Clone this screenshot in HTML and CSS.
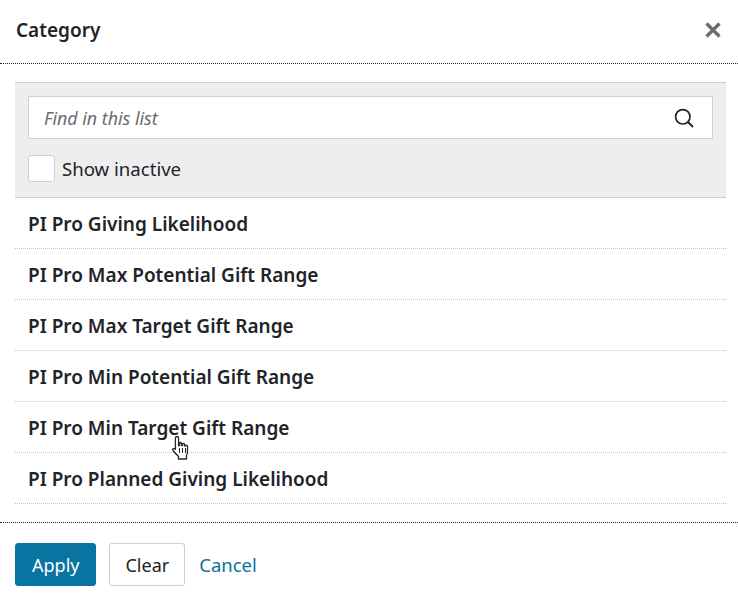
FILE: index.html
```html
<!DOCTYPE html>
<html lang="en">
<head>
<meta charset="utf-8">
<title>Category</title>
<link rel="stylesheet" href="styles.css">
</head>
<body>
<div class="modal">
  <header class="head">
    <h1 class="title">Category</h1>
    <svg class="close" width="16" height="16" viewBox="0 0 16 16" aria-hidden="true"><path d="M1.500 1.500 14.500 14.500M14.500 1.500 1.500 14.500" fill="none" stroke="#686c73" stroke-width="3.200"/></svg>
  </header>
  <main class="body">
    <section class="filter">
      <div class="search">
        <span class="placeholder">Find in this list</span>
        <svg width="22" height="22" viewBox="0 0 22 22" aria-hidden="true"><circle cx="9.800" cy="9.800" r="7.200" fill="none" stroke="#212327" stroke-width="1.700"/><path d="M15 15 20 20" fill="none" stroke="#212327" stroke-width="1.900"/></svg>
      </div>
      <label class="check"><span class="box"></span>Show inactive</label>
    </section>
    <ul class="list">
      <li class="row">PI Pro Giving Likelihood</li>
      <li class="row">PI Pro Max Potential Gift Range</li>
      <li class="row">PI Pro Max Target Gift Range</li>
      <li class="row">PI Pro Min Potential Gift Range</li>
      <li class="row">PI Pro Min Target Gift Range
        <svg class="cursor" width="20" height="26" viewBox="0 0 20 26" aria-hidden="true"><path d="M6 1.500c1 0 1.600.7 1.600 1.700v7.600l1-.3V8.400c0-1.200 2-1.200 2 0v2l.9.1V9.300c0-1.200 2-1.200 2 0v1.500l.8.2c0-1.300 2.200-1.200 2.200.2v5.800c0 1.500-.5 2.500-1 3.500V24H7.500v-2.500C6 20 3.500 17.500 2 15.500c-1-1.300.5-2.800 2-1.500l.4.400V3.200c0-1 .6-1.700 1.600-1.700Z" fill="#fff" stroke="#25272b" stroke-width="1.300" stroke-linejoin="round"/><path d="M8.500 13v5M11.500 13v5M14.500 13v5" stroke="#25272b" stroke-width="1"/></svg>
      </li>
      <li class="row">PI Pro Planned Giving Likelihood</li>
    </ul>
  </main>
  <footer class="foot">
    <button class="btn primary">Apply</button>
    <button class="btn">Clear</button>
    <a class="link" href="#">Cancel</a>
  </footer>
</div>
</body>
</html>
```
FILE: styles.css
```css
* { box-sizing: border-box; }
html, body { margin: 0; padding: 0; background: #fff; }
body { font-family: "Noto Sans", "Open Sans", sans-serif; color: #212327; width: 738px; height: 600px; overflow: hidden; }
.modal { display: flex; flex-direction: column; height: 600px; }
.head { height: 64px; display: flex; align-items: center; justify-content: space-between; padding: 0 17px 3px 16px; border-bottom: 1px dotted #212327; }
.title { margin: 0; font-size: 19px; font-weight: 600; }
.body { height: 459px; padding: 18px 12px 0 15px; border-bottom: 1px dotted #212327; }
.filter { height: 116px; background: #eeeeee; border-top: 1px solid #cdcfd2; border-bottom: 1px solid #cdcfd2; padding: 13px 13px 0; }
.search { height: 43px; background: #fff; border: 1px solid #cdcfd2; display: flex; align-items: center; justify-content: space-between; padding: 0 17px 0 15px; }
.placeholder { font-size: 17.800px; font-style: italic; color: #686c73; }
.check { display: flex; align-items: center; gap: 7px; margin-top: 16px; font-size: 18.600px; line-height: 26px; }
.box { width: 27px; height: 27px; background: #fff; border: 1px solid #cdcfd2; border-radius: 3px; }
.list { list-style: none; margin: 0; padding: 0; }
.row { position: relative; height: 51px; padding: 2px 0 0 13px; display: flex; align-items: center; font-size: 19px; font-weight: 600; border-bottom: 1px dotted #c0c2c5; }
.cursor { position: absolute; left: 156px; top: 33px; }
.foot { display: flex; align-items: center; gap: 13px; padding: 20px 15px 0; }
.btn { height: 43px; padding: 0 15px; font: 400 18px "Noto Sans", "Open Sans", sans-serif; background: #fff; color: #212327; border: 1px solid #cdcfd2; border-radius: 3px; }
.primary { padding: 0 16px; background: #0974a1; border-color: #0974a1; color: #fff; }
.link { margin-left: 1px; color: #0974a1; font-size: 18.500px; text-decoration: none; }
```
